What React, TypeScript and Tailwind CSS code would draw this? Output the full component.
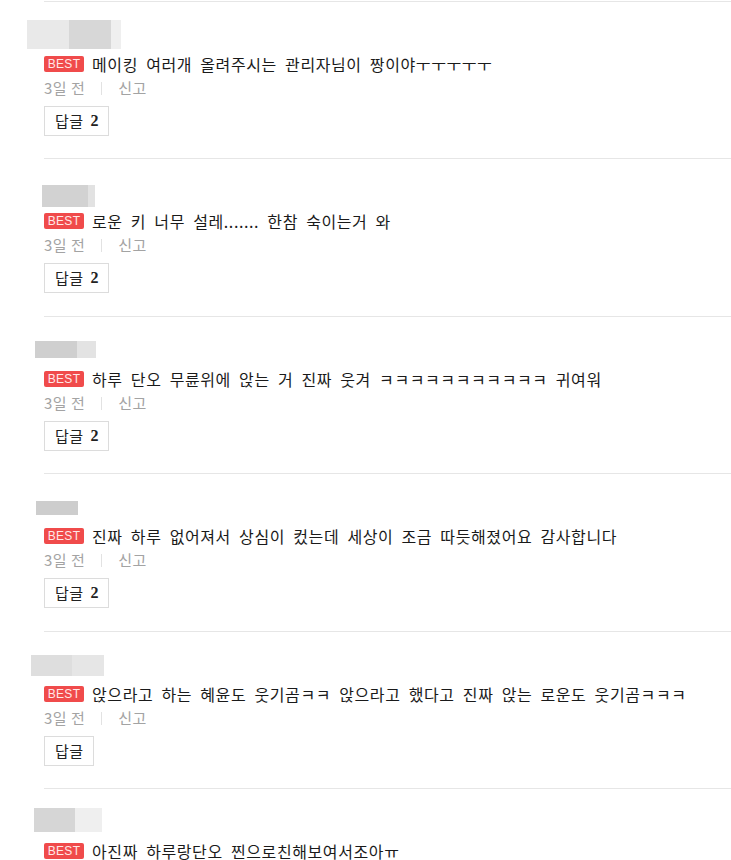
import React from "react";

type Item = {
  text: string;
  replies: number | null;
  pb: string;
  last?: boolean;
  name: React.ReactNode;
};

const items: Item[] = [
  {
    text: "메이킹 여러개 올려주시는 관리자님이 짱이야ㅜㅜㅜㅜㅜ",
    replies: 2,
    pb: "pb-[22px]",
    name: (
      <div className="flex mt-[18px] ml-[27px] h-[29px]">
        <div className="w-[42px] bg-[#e9e9e9]" />
        <div className="w-[42px] bg-[#d7d7d7]" />
        <div className="w-[10px] bg-[#efefef]" />
      </div>
    ),
  },
  {
    text: "로운 키 너무 설레....... 한참 숙이는거 와",
    replies: 2,
    pb: "pb-[23px]",
    name: (
      <div className="flex mt-[26px] ml-[42px] h-[22px]">
        <div className="w-[46px] bg-[#d2d2d2]" />
        <div className="w-[7px] bg-[#e2e2e2]" />
      </div>
    ),
  },
  {
    text: "하루 단오 무륜위에 앉는 거 진짜 웃겨 ㅋㅋㅋㅋㅋㅋㅋㅋㅋㅋㅋ 귀여워",
    replies: 2,
    pb: "pb-[22px]",
    name: (
      <div className="flex mt-[24px] ml-[35px] h-[17px]">
        <div className="w-[42px] bg-[#cfcfcf]" />
        <div className="w-[19px] bg-[#e3e3e3]" />
      </div>
    ),
  },
  {
    text: "진짜 하루 없어져서 상심이 컸는데 세상이 조금 따듯해졌어요 감사합니다",
    replies: 2,
    pb: "pb-[23px]",
    name: (
      <div className="flex mt-[27px] ml-[36px] h-[14px]">
        <div className="w-[42px] bg-[#cdcdcd]" />
      </div>
    ),
  },
  {
    text: "앉으라고 하는 혜윤도 웃기곰ㅋㅋ 앉으라고 했다고 진짜 앉는 로운도 웃기곰ㅋㅋㅋ",
    replies: null,
    pb: "pb-[22px]",
    name: (
      <div className="flex mt-[23px] ml-[31px] h-[21px]">
        <div className="w-[41px] bg-[#dedede]" />
        <div className="w-[32px] bg-[#e6e6e6]" />
      </div>
    ),
  },
  {
    text: "아진짜 하루랑단오 찐으로친해보여서조아ㅠ",
    replies: 2,
    pb: "pb-0",
    last: true,
    name: (
      <div className="flex mt-[19px] ml-[34px] h-[24px]">
        <div className="w-[41px] bg-[#d6d6d6]" />
        <div className="w-[27px] bg-[#efefef]" />
      </div>
    ),
  },
];

const kr = { fontFamily: '"Noto Sans CJK KR", "Noto Sans", sans-serif' };

function Comment({ item }: { item: Item }) {
  return (
    <div className="flex flex-col">
      <div className="ml-[44px] h-px bg-[#e6e6e6]" />
      <div className="h-[54px]">{item.name}</div>
      <div className={"pl-[44px] " + item.pb}>
        <div className="flex items-center h-[16px]">
          <span
            className="flex items-center justify-center w-[40px] h-[16px] rounded-[2px] bg-[#f04b4b] text-[#ffe8e8] text-[12px] leading-none tracking-[0.3px]"
            style={{ fontFamily: '"Liberation Sans", Arial, sans-serif' }}
          >
            BEST
          </span>
          <span
            className="ml-[8px] text-[16px] leading-[16px] text-[#1a1a1a] whitespace-nowrap tracking-[0.6px] [word-spacing:4px]"
            style={kr}
          >
            {item.text}
          </span>
        </div>
        {!item.last && (
          <>
            <div
              className="flex items-center h-[20px] mt-[6px] text-[15px] text-[#a3a3a3] tracking-[0.5px]"
              style={kr}
            >
              <span>3일 전</span>
              <span className="mx-[16px] w-px h-[13px] bg-[#e2e2e2]" />
              <span>신고</span>
            </div>
            <div className="flex mt-[8px]">
              <div
                className="flex items-center h-[30px] pl-[10px] pr-[9px] border border-[#dcdcdc] text-[15px] text-[#222] tracking-[0.5px]"
                style={kr}
              >
                <span>답글</span>
                {item.replies !== null && (
                  <span
                    className="ml-[7px] font-bold text-[16px]"
                    style={{ fontFamily: '"Liberation Serif", serif' }}
                  >
                    {item.replies}
                  </span>
                )}
              </div>
            </div>
          </>
        )}
      </div>
    </div>
  );
}

export default function App() {
  return (
    <div className="w-[731px] h-[860px] overflow-hidden bg-white pt-px">
      {items.map((it, i) => (
        <Comment key={i} item={it} />
      ))}
    </div>
  );
}
